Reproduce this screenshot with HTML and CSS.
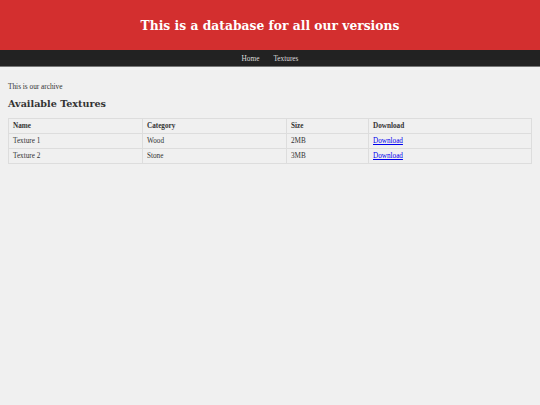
FILE: index.html
```html
<!DOCTYPE html>
<html>
<head>
<meta charset="utf-8">
<link rel="stylesheet" href="styles.css">
</head>
<body>
<header class="site-header">
  <h1 class="site-title">This is a database for all our versions</h1>
</header>
<nav class="site-nav">
  <a class="nav-link" href="#">Home</a>
  <a class="nav-link" href="#">Textures</a>
</nav>
<main class="content">
  <p class="intro">This is our archive</p>
  <h2 class="section-title">Available Textures</h2>
  <table class="data-table">
    <thead>
      <tr>
        <th class="col-name">Name</th>
        <th class="col-cat">Category</th>
        <th class="col-size">Size</th>
        <th class="col-dl">Download</th>
      </tr>
    </thead>
    <tbody>
      <tr>
        <td>Texture 1</td>
        <td>Wood</td>
        <td>2MB</td>
        <td><a class="dl-link" href="#">Download</a></td>
      </tr>
      <tr>
        <td>Texture 2</td>
        <td>Stone</td>
        <td>3MB</td>
        <td><a class="dl-link" href="#">Download</a></td>
      </tr>
    </tbody>
  </table>
</main>
</body>
</html>
```

FILE: styles.css
```css
html, body {
  margin: 0;
  padding: 0;
  background: #f0f0f0;
  font-family: "Liberation Serif", "DejaVu Serif", serif;
  color: #333;
}
.site-header {
  background: #d32f2f;
  height: 50px;
  display: flex;
  align-items: center;
  justify-content: center;
}
.site-title {
  margin: 0;
  color: #fff;
  font-family: "DejaVu Serif", serif;
  font-size: 12.3px;
  font-weight: bold;
}
.site-nav {
  background: #222;
  height: 16px;
  border-bottom: 1px solid #777;
  display: flex;
  justify-content: center;
  align-items: center;
  gap: 14px;
}
.nav-link {
  color: #ddd;
  text-decoration: none;
  font-size: 7.3px;
}
.content {
  padding: 0 8px;
}
.intro {
  margin: 15px 0 0;
  font-size: 7.3px;
  line-height: 9px;
}
.section-title {
  margin: 6px 0 7px;
  font-family: "DejaVu Serif", serif;
  font-size: 9.6px;
  line-height: 14px;
  font-weight: bold;
}
.data-table {
  width: 100%;
  border-collapse: collapse;
  font-size: 7.2px;
  color: #333;
}
.data-table th,
.data-table td {
  border: 1px solid #ddd;
  padding: 3px 4px;
  height: 8px;
  line-height: 8px;
  text-align: left;
}
.data-table th {
  font-weight: bold;
}
.col-name { width: 125px; }
.col-cat { width: 135px; }
.col-size { width: 73px; }
.dl-link {
  color: #00e;
  text-decoration: underline;
}
```
